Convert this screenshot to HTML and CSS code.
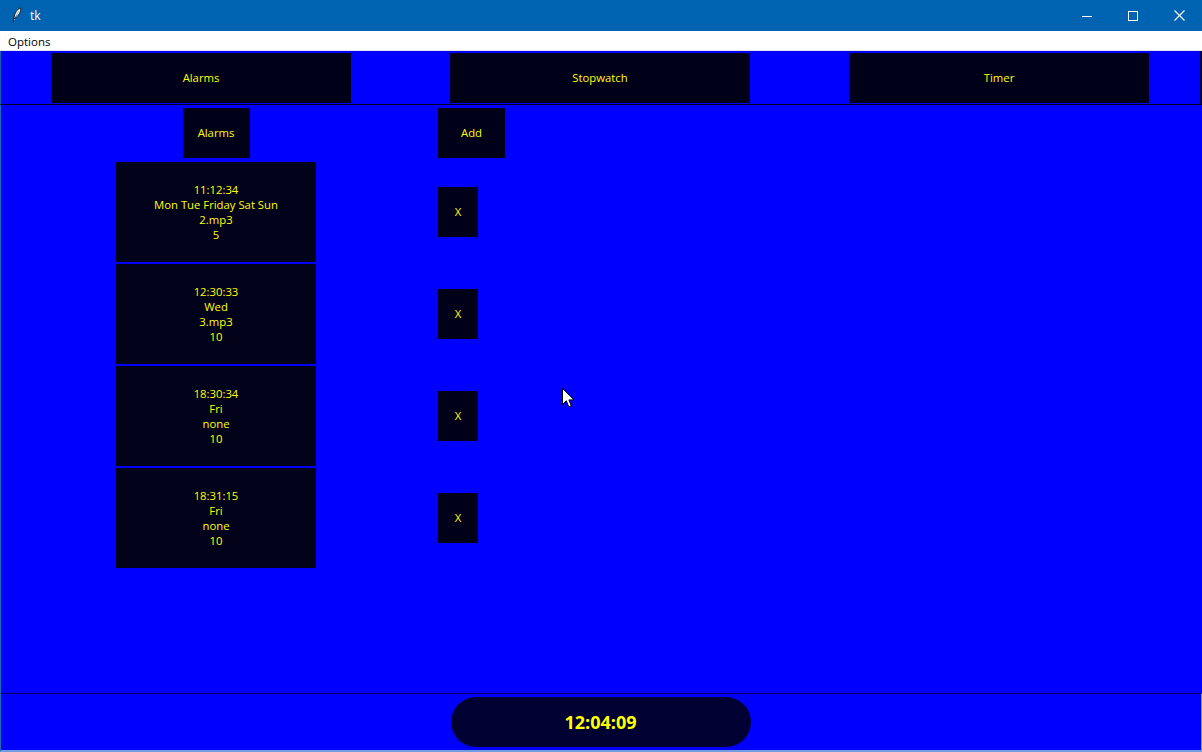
FILE: index.html
```html
<!DOCTYPE html>
<html>
<head>
<meta charset="utf-8">
<title>tk</title>
<link rel="stylesheet" href="styles.css">
</head>
<body>
<div class="window">
  <div class="titlebar">
    <svg class="feather" width="10" height="16" viewBox="0 0 10 16">
      <path d="M8.5 0.8 C5 2.5 2.5 6 1.8 12 L1.2 15.5 M8.5 0.8 C9.5 4 7 9 2 12" fill="#ffffff" stroke="#1a1a1a" stroke-width="1"/>
    </svg>
    <span class="title">tk</span>
    <div class="controls">
      <div class="ctl"><svg width="10" height="10" viewBox="0 0 10 10"><path d="M0 5.5 H10" stroke="#fff" stroke-width="1"/></svg></div>
      <div class="ctl"><svg width="10" height="10" viewBox="0 0 10 10"><rect x="0.5" y="0.5" width="9" height="9" fill="none" stroke="#fff" stroke-width="1"/></svg></div>
      <div class="ctl"><svg width="11" height="11" viewBox="0 0 11 11"><path d="M0.5 0.5 L10.5 10.5 M10.5 0.5 L0.5 10.5" stroke="#fff" stroke-width="1.1"/></svg></div>
    </div>
  </div>
  <div class="menubar"><span class="menu-item">Options</span></div>
  <div class="tabframe">
    <div class="tab">Alarms</div>
    <div class="tab">Stopwatch</div>
    <div class="tab">Timer</div>
  </div>
  <div class="main">
    <div class="grid">
      <div class="btn head-left">Alarms</div>
      <div class="btn add">Add</div>
      <div class="card">11:12:34<br>Mon Tue Friday Sat Sun<br>2.mp3<br>5</div>
      <div class="btn xbtn">X</div>
      <div class="card">12:30:33<br>Wed<br>3.mp3<br>10</div>
      <div class="btn xbtn">X</div>
      <div class="card">18:30:34<br>Fri<br>none<br>10</div>
      <div class="btn xbtn">X</div>
      <div class="card">18:31:15<br>Fri<br>none<br>10</div>
      <div class="btn xbtn">X</div>
    </div>
    <div class="footer">
      <div class="clock">12:04:09</div>
    </div>
  </div>
  <svg class="cursor" width="13" height="20" viewBox="0 0 13 20">
    <path d="M0.5 0.5 V16.5 L4.3 12.8 L6.8 18.8 L9.3 17.8 L6.9 11.9 L12 11.9 Z" fill="#fff" stroke="#000" stroke-width="1" stroke-linejoin="miter"/>
  </svg>
</div>
</body>
</html>
```
FILE: styles.css
```css
html, body {
  margin: 0;
  padding: 0;
  background: #0000ff;
}
.window {
  position: relative;
  width: 1202px;
  height: 752px;
  display: flex;
  flex-direction: column;
  font-family: "Open Sans", "Noto Sans", sans-serif;
  font-size: 11.3px;
  overflow: hidden;
}
.titlebar {
  height: 31px;
  flex: none;
  background: #0063b1;
  display: flex;
  align-items: center;
  color: #fff;
}
.feather {
  margin-left: 12px;
  margin-top: -1px;
}
.title {
  margin-left: 8px;
  font-size: 12px;
  margin-top: -1px;
}
.controls {
  margin-left: auto;
  display: flex;
  height: 31px;
}
.ctl {
  width: 46px;
  height: 31px;
  display: flex;
  align-items: center;
  justify-content: center;
}
.menubar {
  height: 19px;
  flex: none;
  background: #ffffff;
  border-bottom: 1px solid #e4e4e4;
  display: flex;
  align-items: center;
  color: #000;
}
.menu-item {
  margin-left: 8px;
  font-size: 11.5px;
  margin-top: 1px;
}
.tabframe {
  flex: none;
  display: flex;
  gap: 99px;
  padding: 2px 0 1px 51px;
  background: #0000ff;
  border-bottom: 1px solid #000018;
  border-right: 2px solid #000040;
  border-left: 1px solid #1060b0;
  box-sizing: border-box;
  width: 1202px;
}
.tab {
  width: 300px;
  height: 50px;
  background: #000018;
  color: #ffff00;
  display: flex;
  align-items: center;
  justify-content: center;
  padding-bottom: 1px;
  box-sizing: border-box;
}
.tabframe .tab:first-child {
  margin-left: -1px;
}
.main {
  flex: 1;
  display: flex;
  flex-direction: column;
  border-left: 1px solid #1a6ab8;
  border-bottom: 2px solid #6f9fe0;
}
.grid {
  display: grid;
  grid-template-columns: 200px auto;
  column-gap: 122px;
  row-gap: 2px;
  padding: 3px 0 0 115px;
  justify-content: start;
}
.btn {
  background: #000018;
  color: #ffff00;
  display: flex;
  align-items: center;
  justify-content: center;
  height: 50px;
  padding-bottom: 1px;
  box-sizing: border-box;
}
.head-left {
  width: 67px;
  justify-self: center;
  margin-bottom: 2px;
}
.add {
  width: 67px;
  justify-self: start;
  margin-bottom: 2px;
}
.card {
  height: 100px;
  background: #02021a;
  color: #ffff00;
  display: flex;
  align-items: center;
  justify-content: center;
  text-align: center;
  line-height: 15px;
  padding-bottom: 1px;
  box-sizing: border-box;
}
.xbtn {
  width: 40px;
  align-self: center;
  justify-self: start;
}
.footer {
  margin-top: auto;
  border-top: 1px solid #00005a;
  padding: 3px 0 3px 0;
  display: flex;
  justify-content: center;
  margin-right: -1px;
  border-right: 2px solid #6f9fe0;
}
.clock {
  width: 300px;
  height: 50px;
  border-radius: 25px;
  background: #000033;
  color: #ffff00;
  font-weight: bold;
  font-size: 18px;
  display: flex;
  align-items: center;
  justify-content: center;
  margin-left: -1px;
}
.cursor {
  position: absolute;
  left: 562px;
  top: 388px;
}
```
